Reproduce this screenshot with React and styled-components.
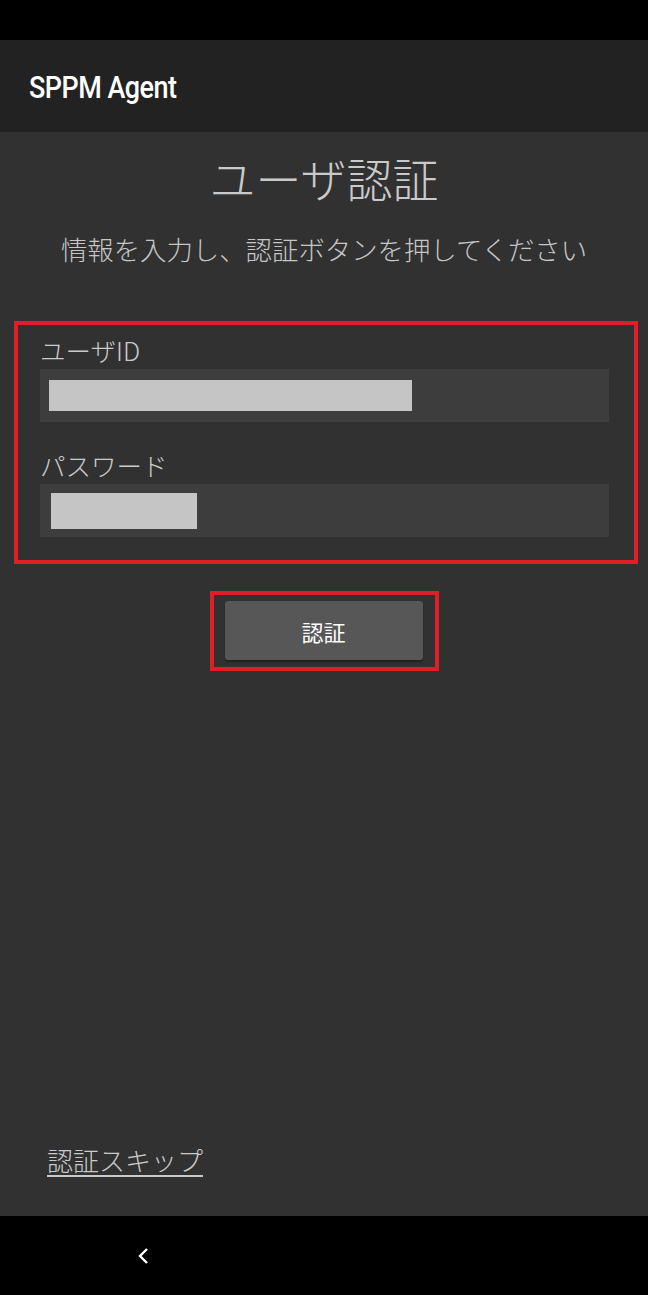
import React from "react";
import styled, { createGlobalStyle } from "styled-components";

const Global = createGlobalStyle`
  html, body { margin: 0; padding: 0; background: #000; }
  body { font-family: "Noto Sans CJK JP", "Noto Sans", sans-serif; }
  #root { width: 648px; height: 1295px; }
`;

const Screen = styled.div`
  width: 648px;
  height: 1295px;
  display: flex;
  flex-direction: column;
  background: #313131;
`;

const StatusBar = styled.div`
  height: 40px;
  background: #000;
  flex: none;
`;

const AppBar = styled.header`
  height: 92px;
  flex: none;
  background: #222222;
  display: flex;
  align-items: center;
  padding-left: 29px;
  box-sizing: border-box;
`;

const AppTitle = styled.h1`
  margin: 0;
  font-family: Roboto, "Liberation Sans", sans-serif;
  font-weight: 500;
  font-size: 31px;
  color: #ffffff;
  letter-spacing: -0.6px;
  transform: scaleX(0.87);
  transform-origin: left center;
  margin-top: 2px;
`;

const Content = styled.main`
  flex: 1;
  display: flex;
  flex-direction: column;
  align-items: center;
  padding-top: 13px;
  box-sizing: border-box;
`;

const Title = styled.h2`
  margin: 0;
  font-weight: 300;
  font-size: 46px;
  line-height: 64px;
  color: #cacaca;
`;

const Subtitle = styled.p`
  margin: 22px 0 0;
  font-weight: 300;
  font-size: 26.4px;
  line-height: 36px;
  color: #c6c6c6;
`;

const Highlight = styled.div`
  border: 4px solid #e11d27;
  box-sizing: border-box;
`;

const FormBox = styled(Highlight)`
  margin-top: 54px;
  width: 624px;
  padding: 8px 25px 23px 22px;
  display: flex;
  flex-direction: column;
  align-self: flex-start;
  margin-left: 14px;
`;

const Label = styled.label`
  font-size: 25.5px;
  font-weight: 300;
  line-height: 34px;
  color: #cacaca;
  margin-top: ${(p) => (p.$first ? "0" : "26px")};
`;

const Input = styled.div`
  margin-top: 2px;
  height: 53px;
  background: #3d3d3d;
  display: flex;
  align-items: center;
  padding-left: ${(p) => p.$pad}px;
`;

const Mask = styled.div`
  height: ${(p) => p.$h}px;
  width: ${(p) => p.$w}px;
  background: #c5c5c5;
`;

const ButtonBox = styled(Highlight)`
  margin-top: 27px;
  width: 229px;
  height: 80px;
  padding: 6px 12px 7px 11px;
  display: flex;
`;

const Button = styled.button`
  flex: 1;
  border: none;
  border-radius: 3px;
  background: #575757;
  color: #ffffff;
  font-family: "Noto Sans CJK JP", sans-serif;
  font-size: 22px;
  box-shadow: 0 2px 2px rgba(0, 0, 0, 0.35);
`;

const Spacer = styled.div`
  flex: 1;
`;

const SkipLink = styled.a`
  align-self: flex-start;
  margin-left: 47px;
  margin-bottom: 38px;
  font-size: 26px;
  font-weight: 300;
  line-height: 36px;
  color: #cacaca;
  text-decoration: underline;
  text-underline-offset: 4px;
  text-decoration-thickness: 2px;
`;

const NavBar = styled.nav`
  height: 79px;
  flex: none;
  background: #000;
  display: flex;
  align-items: center;
  padding-left: 136px;
`;

export default function App() {
  return (
    <>
      <Global />
      <Screen>
        <StatusBar />
        <AppBar>
          <AppTitle>SPPM Agent</AppTitle>
        </AppBar>
        <Content>
          <Title>ユーザ認証</Title>
          <Subtitle>情報を入力し、認証ボタンを押してください</Subtitle>
          <FormBox>
            <Label $first>ユーザID</Label>
            <Input $pad={9}>
              <Mask $w={363} $h={31} />
            </Input>
            <Label>パスワード</Label>
            <Input $pad={11}>
              <Mask $w={146} $h={36} />
            </Input>
          </FormBox>
          <ButtonBox>
            <Button>認証</Button>
          </ButtonBox>
          <Spacer />
          <SkipLink>認証スキップ</SkipLink>
        </Content>
        <NavBar>
          <svg width="14" height="20" viewBox="0 0 14 20">
            <path d="M11 3 L4 10 L11 17" fill="none" stroke="#fff" strokeWidth="2.4" />
          </svg>
        </NavBar>
      </Screen>
    </>
  );
}
